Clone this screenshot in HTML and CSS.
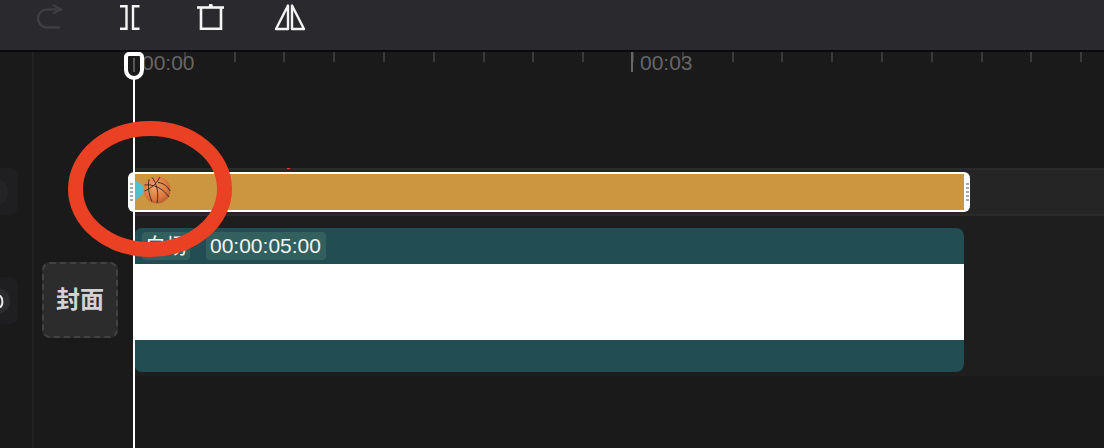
FILE: index.html
```html
<!DOCTYPE html>
<html lang="zh">
<head>
<meta charset="utf-8">
<title>Timeline</title>
<link rel="stylesheet" href="styles.css">
</head>
<body>
<div class="app">
  <header class="toolbar">
    <svg class="ico ico-redo" width="26" height="26" viewBox="0 0 26 26" fill="none" stroke="#3e3e41" stroke-width="2.4"><path d="M24 6.5H10a9 9 0 0 0 0 18H23"/><path d="M16 2L24 6.5L16 10.5"/></svg>
    <svg class="ico ico-split" width="22" height="26" viewBox="0 0 22 26" fill="none" stroke="#f4f4f4" stroke-width="2.4"><path d="M1 2.2H7.5V24.8H1"/><path d="M20.5 2.2H14V24.8H20.5"/></svg>
    <svg class="ico ico-del" width="28" height="28" viewBox="0 0 28 28" fill="none" stroke="#f4f4f4" stroke-width="2.6"><path d="M0 4.5H27"/><path d="M4 4.5V25.8H24V4.5"/><path d="M12 4.5L12.8 1.6H14.8L15.6 4.5" fill="#f4f4f4" stroke-width="1.2"/></svg>
    <svg class="ico ico-flip" width="32" height="28" viewBox="0 0 32 28" fill="none" stroke="#f4f4f4" stroke-width="2.4" stroke-linejoin="round"><path d="M14 2.5V26H2Z"/><path d="M18 2.5V26H30Z"/></svg>
  </header>
  <main class="timeline">
    <aside class="controls">
      <div class="ctl ctl-one"><span class="knob"></span></div>
      <div class="ctl ctl-two">
        <svg class="knob-svg" width="18" height="28" viewBox="0 0 18 28"><circle cx="-3" cy="14" r="13" fill="#2c2c2e"/><path d="M0 8.5C3.2 11.5 3.2 18 0 20.5" fill="none" stroke="#e8e8e8" stroke-width="2"/></svg>
      </div>
    </aside>
    <div class="cover-col">
      <button class="cover">封面</button>
    </div>
    <section class="tracks">
      <div class="ruler">
        <div class="mark">00:00</div>
        <div class="mark mark-major"><i class="major-tick"></i>00:03</div>
      </div>
      <div class="row-sticker">
        <div class="clip">
          <div class="handle"><b></b></div>
          <div class="clip-body">
            <span class="tri"></span>
            <svg class="ball" width="28" height="28" viewBox="0 0 28 28">
              <defs><radialGradient id="bg" cx="42%" cy="38%" r="68%"><stop offset="0" stop-color="#f0a26c"/><stop offset=".65" stop-color="#dc7a40"/><stop offset="1" stop-color="#b05a2a"/></radialGradient></defs>
              <circle cx="14" cy="14" r="13.5" fill="url(#bg)"/>
              <g fill="none" stroke="#3a2218" stroke-width=".9">
                <path d="M9 1.5C14 7 16 18 14 27"/>
                <path d="M1.5 9C9 8 19 11 26 21"/>
                <path d="M17 1C14 7 9 12 1.5 15"/>
                <path d="M15 6.5C21 7 25 11 27 15"/>
                <path d="M6 3.5C5 9 5 17 9 25.5"/>
              </g>
            </svg>
          </div>
          <div class="handle"><b></b></div>
        </div>
      </div>
      <div class="row-main">
        <div class="video">
          <div class="video-head"><span class="tag tag-label">白场</span><span class="tag">00:00:05:00</span></div>
          <div class="video-frame"></div>
          <div class="video-foot"></div>
        </div>
      </div>
      <span class="speck"></span>
    </section>
    <div class="playhead"><span class="playhead-cap"></span></div>
    <svg class="ring" width="170" height="144" viewBox="0 0 170 144"><ellipse cx="85" cy="72" rx="74.5" ry="60.5" fill="none" stroke="#ea4024" stroke-width="15"/></svg>
  </main>
</div>
</body>
</html>
```
FILE: styles.css
```css
* { box-sizing: border-box; }
html, body { margin: 0; padding: 0; background: #1a1a1a; }
.app { width: 1104px; height: 448px; overflow: hidden; font-family: "Liberation Sans", Arial, sans-serif; }

.toolbar {
  height: 52px;
  background: #2a2a2e;
  border-bottom: 2px solid #0b0b0b;
  display: flex;
  align-items: flex-start;
}
.ico { display: block; flex: none; }
.ico-redo { margin: 3px 0 0 37px; }
.ico-split { margin: 4px 0 0 56px; }
.ico-del { margin: 3px 0 0 56px; }
.ico-flip { margin: 3px 0 0 49px; }

.timeline { position: relative; height: 396px; display: flex; }

.controls { width: 34px; flex: none; border-right: 2px solid #222; padding-top: 116px; }
.ctl { width: 18px; height: 47px; background: #1f1f21; border-radius: 0 8px 8px 0; display: flex; align-items: center; overflow: hidden; }
.ctl-two { margin-top: 62px; }
.knob { width: 28px; height: 28px; border-radius: 50%; background: #242426; margin-left: -20px; flex: none; }
.knob-svg { display: block; flex: none; }

.cover-col { width: 100px; flex: none; padding: 210px 0 0 8px; }
.cover {
  display: flex; align-items: center; justify-content: center;
  width: 76px; height: 76px; padding: 0 0 6px;
  background: #2c2c2c;
  border: 2px dashed #424242;
  border-radius: 8px;
  color: #d2d2d2;
  font: 700 24px "Noto Sans CJK SC", sans-serif;
}

.tracks { position: relative; flex: 1; min-width: 0; }

.ruler {
  height: 116px;
  display: flex;
  background-image: repeating-linear-gradient(to right, #3a3a3a 0 2px, transparent 2px 49.8px);
  background-size: 100% 10px;
  background-repeat: no-repeat;
  color: #666;
  font-size: 21px;
  line-height: 22px;
}
.mark { width: 497px; flex: none; padding-left: 8px; display: flex; align-items: flex-start; height: 22px; }
.mark-major { padding-left: 0; width: 200px; }
.major-tick { width: 2px; height: 20px; background: #666; margin-right: 7px; flex: none; }

.row-sticker {
  height: 48px;
  padding-top: 2px;
  background: #252525;
  border-top: 2px solid #2b2b2b;
  border-bottom: 2px solid #2b2b2b;
}
.clip {
  width: 842px; height: 40px;
  margin-left: -6px;
  display: flex;
  background: #fff;
  border-radius: 6px;
}
.handle { width: 6px; flex: none; display: flex; align-items: center; justify-content: center; }
.handle b { width: 3px; height: 18px; background: repeating-linear-gradient(to bottom, #aaa 0 2px, #fff 2px 4px); }
.clip-body {
  flex: 1;
  margin: 2px 0;
  background: #cb963f;
  display: flex;
  align-items: center;
  padding-bottom: 4px;
}
.tri { width: 0; height: 0; border-left: 14px solid #4fc0d0; border-top: 11px solid transparent; border-bottom: 11px solid transparent; flex: none; }
.ball { margin-left: -5px; flex: none; }

.row-main { height: 160px; padding-top: 12px; background: #1e1e1e; }
.video { width: 830px; height: 144px; border-radius: 8px; overflow: hidden; background: #224d52; display: flex; flex-direction: column; }
.video-head { height: 36px; display: flex; align-items: flex-start; gap: 16px; padding: 4px 0 0 8px; }
.tag { height: 28px; line-height: 28px; padding: 0 5px 0 4px; border-radius: 4px; background: #32605f; color: #f5f5f5; font-size: 21px; font-family: "Liberation Sans", "Noto Sans CJK SC", sans-serif; }
.tag-label { padding: 0 3px; }
.video-frame { height: 76px; background: #fff; }
.video-foot { flex: 1; }

.speck { position: absolute; left: 153px; top: 116px; width: 3px; height: 1px; background: #ea4024; }

.playhead { position: absolute; left: 133px; top: 0; width: 2px; height: 396px; background: #fff; }
.playhead-cap {
  position: absolute; left: -9px; top: 0;
  width: 20px; height: 28px;
  background: #1a1a1a;
  border: 4px solid #fff;
  border-radius: 5px 5px 10px 10px;
}
.playhead-cap::after { content: ""; position: absolute; left: 5px; top: 2px; width: 2px; height: 14px; background: #555; }

.ring { position: absolute; left: 65px; top: 65px; }
```
